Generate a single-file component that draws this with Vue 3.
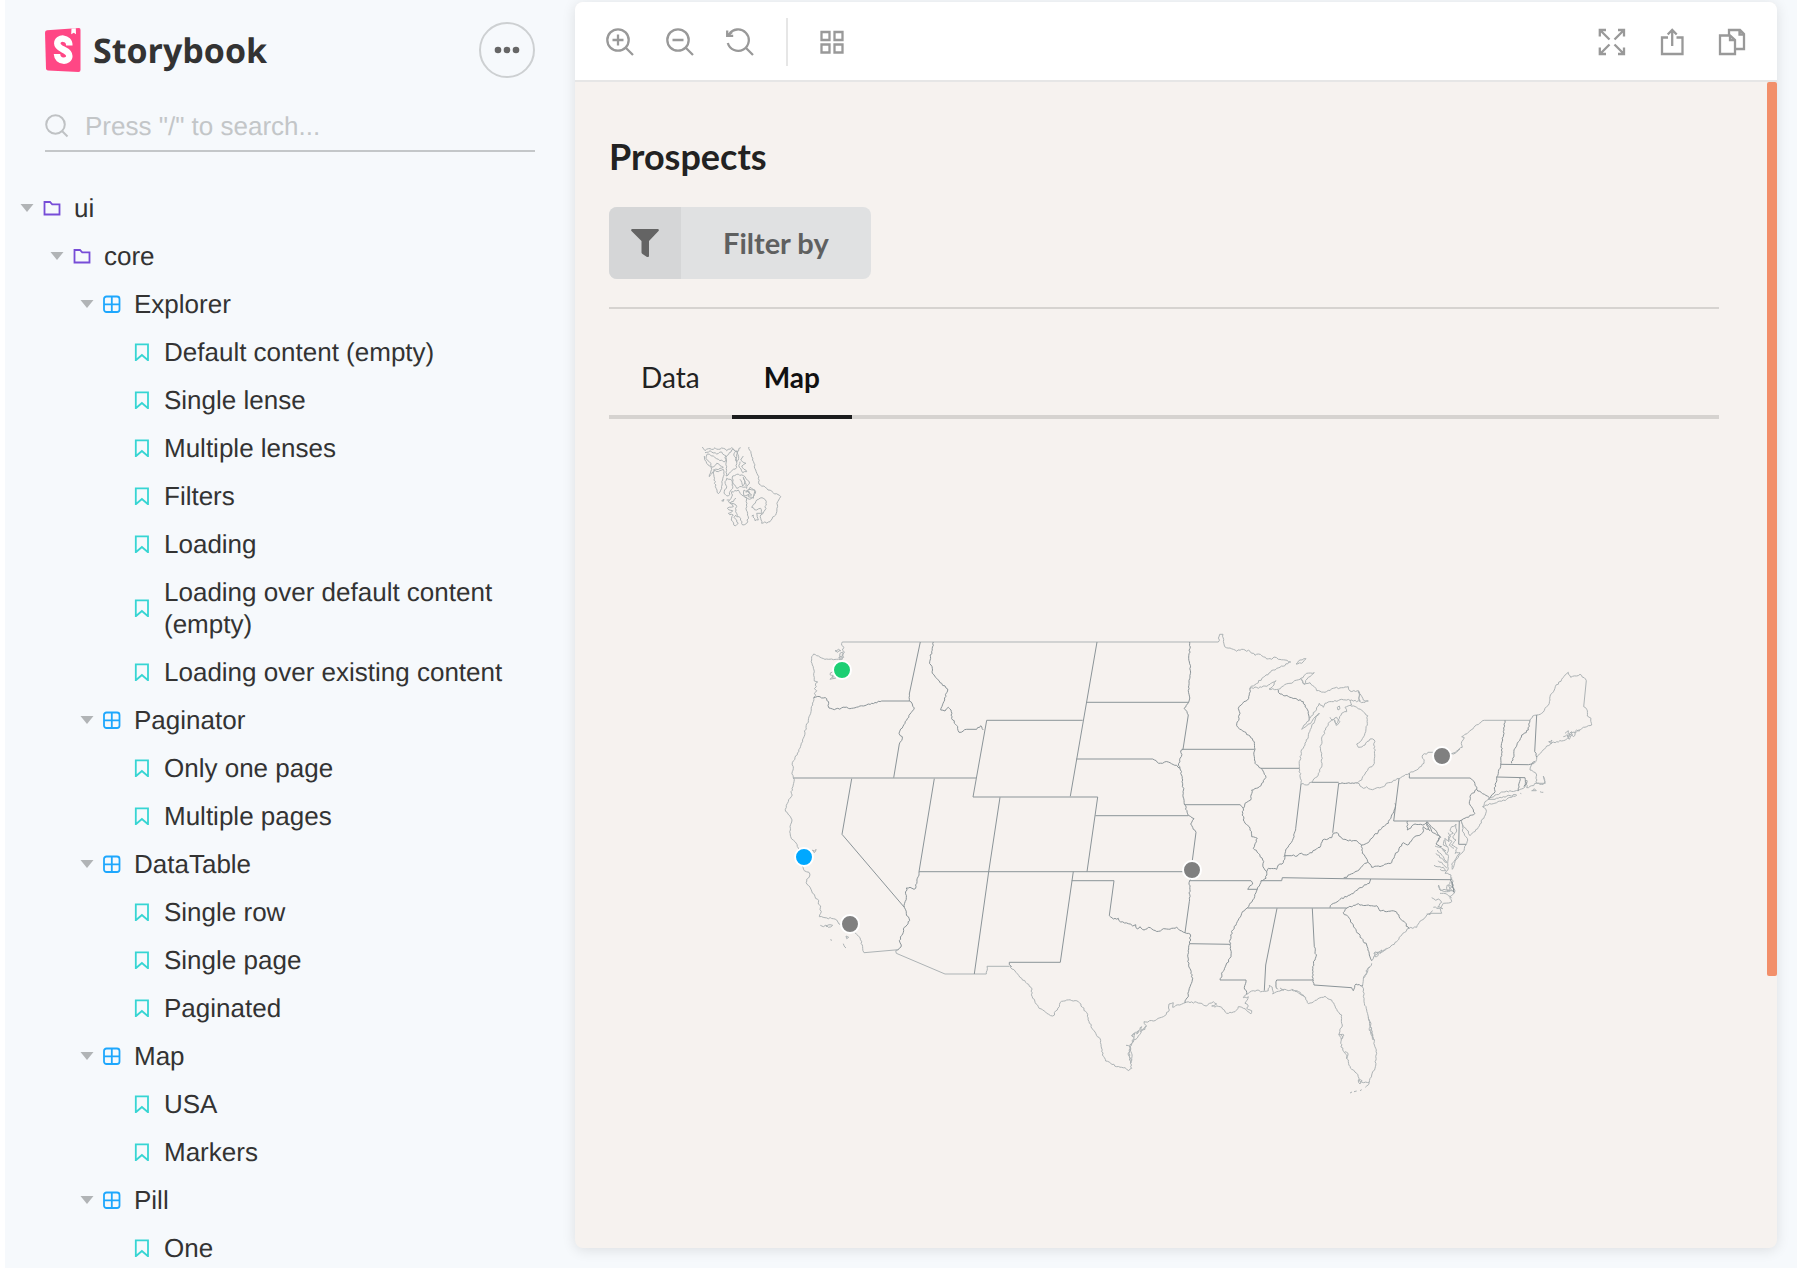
<script setup>
const tree = [
  { label: 'ui', kind: 'folder', depth: 0 },
  { label: 'core', kind: 'folder', depth: 1 },
  { label: 'Explorer', kind: 'component', depth: 2 },
  { label: 'Default content (empty)', kind: 'story', depth: 3 },
  { label: 'Single lense', kind: 'story', depth: 3 },
  { label: 'Multiple lenses', kind: 'story', depth: 3 },
  { label: 'Filters', kind: 'story', depth: 3 },
  { label: 'Loading', kind: 'story', depth: 3 },
  { label: 'Loading over default content (empty)', kind: 'story', depth: 3 },
  { label: 'Loading over existing content', kind: 'story', depth: 3 },
  { label: 'Paginator', kind: 'component', depth: 2 },
  { label: 'Only one page', kind: 'story', depth: 3 },
  { label: 'Multiple pages', kind: 'story', depth: 3 },
  { label: 'DataTable', kind: 'component', depth: 2 },
  { label: 'Single row', kind: 'story', depth: 3 },
  { label: 'Single page', kind: 'story', depth: 3 },
  { label: 'Paginated', kind: 'story', depth: 3 },
  { label: 'Map', kind: 'component', depth: 2 },
  { label: 'USA', kind: 'story', depth: 3 },
  { label: 'Markers', kind: 'story', depth: 3 },
  { label: 'Pill', kind: 'component', depth: 2 },
  { label: 'One', kind: 'story', depth: 3 }
]

// Map sections. Each has its own origin; points are in thirds of a map unit.
const sections = [
  {
    origin: [590, 180],
    coast: [
      '477,800 485,830 497,870 503,885 507,912 530,925 550,938 572,950 563,965 559,1000 540,1025 515,1030 512,1005 525,990 529,965 516,953 500,960 485,982 500,990 512,985 517,1000 500,1000 505,1020 495,1022 490,1005 485,1008',
      '337,801 345,812 355,806 370,808 375,803 385,808 400,805 410,812 425,803 440,815 452,803',
      '345,818 360,812 380,822 395,816 408,828 405,845 385,838 370,828 352,822 348,835 358,845 365,862 380,850 400,862 390,865 372,872 358,890 365,868 350,850 343,828',
      '372,868 385,875 400,868 400,890 395,925 385,941 376,920 372,890 372,868',
      '408,832 410,860 408,888 430,868 440,862 438,835 443,815 430,808 418,818 408,832',
      '432,820 440,845 446,830 440,812 432,820',
      '460,828 452,840 468,850 455,858 462,868 470,875 458,878 448,862 450,845',
      '428,888 445,882 465,890 478,905 470,925 455,920 440,925 430,912 428,888',
      '450,898 458,918 465,905 460,892 468,918',
      '410,895 425,900 428,925 415,948 402,940 410,920 405,905 410,895',
      '462,930 478,935 475,950 490,955 497,935 480,922 470,932 485,945 462,948 462,930',
      '468,938 480,928 495,930 492,948 478,958 468,950',
      '425,935 445,930 455,945 470,955 468,985 475,1010 470,1030 458,1035 452,1015 440,1010 438,975 425,970 415,965 425,950 425,935',
      '438,955 420,970 430,980 412,985 428,992 415,1000 430,1005 424,1020 436,1038 445,1030 432,1012 438,1005',
      '395,962 402,958 400,964 395,962',
      '410,960 418,960'
    ],
    inner: []
  },
  {
    origin: [770, 620],
    coast: [
      '217,66 690,66',
      '217,66 215,76 222,82 217,90 223,98 216,104 221,112 215,120 190,119 170,117 155,114 140,107 131,102 125,110 127,135 132,150 133,183 143,186 137,190 139,200 133,206 140,212 133,220 137,226 131,233',
      '195,92 205,88 212,92 203,97 195,92',
      '210,100 218,96 218,108 209,110 210,100',
      '206,113 218,112 214,118 206,113',
      '190,152 180,164 190,168 180,178 198,174 192,160 186,172 200,168',
      '131,233 128,255 122,280 115,302 108,322 100,355 90,385 75,412 67,428 70,440 67,455 70,473 72,485 66,505 64,530 55,545 49,556 46,568 54,582 63,594 65,606 60,620 62,650 75,665 85,684 92,700',
      '127,690 133,698 138,688 133,694 128,690',
      '97,738 103,752 117,757 119,768 110,778 111,793 125,813 135,830 146,842 145,852 152,858 152,880 148,890 165,893 190,896 200,900 207,912 225,915',
      '255,938 265,948 275,965 278,985 282,998',
      '282,998 385,989 377,992 379,1000',
      '379,1000 525,1062',
      '525,1062 649,1062 651,1039 718,1039',
      '151,916 160,920 168,915 175,922 188,916 180,914 168,921',
      '228,948 236,952 230,956 228,948',
      '220,971 228,984 222,978',
      '181,959 186,961'
    ],
    inner: [
      '131,233 150,230 170,236 176,250 177,264 193,269 225,262 245,265 280,258 305,250 335,243 418,243',
      '451,66 418,222 418,243 427,252 433,264 420,282 405,310 392,327 387,340 397,350 388,372 371,473',
      '70,474 618,474',
      '245,476 216,643 403,862',
      '493,476 447,755',
      '447,755 438,800 432,808 420,802 409,804 409,833 403,862 409,880 419,902 403,922 398,942 388,962 394,975 385,989',
      '447,755 690,755',
      '690,532 656,755 613,1062',
      '490,66 479,125 487,145 487,160 500,175 515,190 533,207 524,240 512,270 525,273 535,262 543,270 548,300 563,320 567,337 590,328 620,328 632,317 640,330',
      '690,301 650,301 609,531 690,531'
    ]
  },
  {
    origin: [1000, 620],
    coast: ['0,66 655,66 659,43 669,43 674,80'],
    inner: [
      '291,66 211,529',
      '259,247 566,247',
      '569,66 571,81 566,111 571,151 567,181 565,211 568,240 566,247 552,265 565,285',
      '565,285 549,388',
      '0,301 248,301',
      '229,417 458,417 476,430 505,426 530,436 540,445',
      '549,388 542,392 544,410 536,430 540,445 548,480 550,520 553,553 565,586 582,596 572,612 580,628 588,637',
      '588,637 577,722',
      '545,388 600,388',
      '553,554 600,554',
      '286,587 565,587',
      '0,531 293,531 261,755',
      '0,755 576,755',
      '220,755 181,1027 28,1027 28,1034 35,1040',
      '215,782 342,782 328,887',
      '328,887 340,897 355,895 362,906 385,911 398,918 407,914 412,927 420,920 432,930 445,922 460,930 476,934 490,926 515,925 530,922 545,933 555,938 571,943',
      '576,750 569,782',
      '569,782 568,845 555,938',
      '569,782 753,782 758,792 743,808 772,808',
      '569,971 690,973'
    ]
  },
  {
    origin: [1200, 620],
    coast: [
      '74,80 90,84 110,94 125,88 150,94 165,106 175,102 200,117 215,118 222,111 235,118 255,120 272,126 240,142 220,150 190,172 165,194 150,204 185,202 205,195 228,182 222,195 207,207 235,208 250,198 270,190 300,178 320,160 343,158 325,172 312,193 302,175 312,193 330,188 343,200 350,212 375,217 400,205 425,203 445,200 450,213 478,215 476,235 480,243 475,212 490,240 505,243 490,247 455,240 425,238 400,245 375,250 370,262 358,250 355,258 345,275 330,295',
      '327,302 312,315 305,328 320,318 335,305 358,279 345,300 335,318 325,350 315,375 303,395 298,445 303,492 320,495 335,487 355,465 366,430 365,400 360,380 370,345 385,310 400,298 408,312 415,300 425,280 440,275 435,262 455,255 452,240',
      '412,262 418,258 420,266 414,270 412,262',
      '390,292 396,300 410,292 420,305 408,316 404,300',
      '450,255 470,262 490,275 503,287 502,310 497,335 485,360 470,372 475,382 495,375 510,357 523,360',
      '523,360 524,410 520,435 505,445 495,462 485,480 472,489 490,505 500,500 512,508 550,500 565,488 597,476 628,460 650,450 672,430 668,405 690,397 705,397',
      '750,402 765,400 780,387',
      '288,132 300,120 318,116 305,130 288,132',
      '515,1022 525,1005 545,995 570,982 590,965 605,945 627,925 650,922 655,912 680,885 690,880 725,880 720,865 730,850 755,845 750,830 764,816 755,772',
      '522,1000 532,996 535,1006 524,1010 522,1000 545,990 540,1000 560,985',
      '695,833 707,841 715,837 725,847 713,861 728,866 700,862',
      '715,795 720,810 740,815 755,810 742,795 741,810 762,815',
      '720,820 740,822 755,835'
    ],
    inner: [
      '235,210 240,222 275,233 310,245 320,265 326,285 327,302',
      '150,204 146,235 128,250 115,265 120,280 110,317 125,330 145,345 163,365 165,388 163,410 165,430 183,445 197,467 190,487 178,500 155,510 152,540 135,550 130,565 127,575 130,600 150,625 155,650 172,655 160,685 175,700 188,720 192,745 200,755',
      '183,445 298,445',
      '0,388 164,388',
      '0,554 120,554 130,565',
      '303,492 287,625',
      '287,625 280,655 270,672 257,690 252,710',
      '200,755 205,745 230,748 235,735 250,728 255,707 275,707 292,708 305,700 320,705 345,690 360,682 368,660 395,653 400,640 412,638 425,655 440,660 470,662 485,675 500,670 520,650 545,625 565,610 575,585 585,565 585,550',
      '416,490 398,638',
      '335,487 416,487',
      '416,491 472,489',
      '597,476 581,603 778,603',
      '628,460 628,474 780,474',
      '485,675 487,700 503,725 515,742 545,738 575,728 585,705 610,668 622,675 640,655 668,638 670,620 690,632 680,610',
      '622,603 622,630 645,612 668,615 683,606 700,625 710,635 722,652 710,665',
      '503,725 480,745 460,760 430,775',
      '183,782 245,782 247,773 430,776',
      '430,776 755,779',
      '200,755 198,775 183,782 172,808 158,840 142,864 125,880 115,900 98,930 90,960 92,990 93,1010 78,1035 68,1055 60,1080 138,1080',
      '142,864 440,864 470,853 530,857 540,873 585,874',
      '585,874 627,925',
      '512,777 508,790 480,803 450,825 420,838 395,853 390,863',
      '231,865 197,1035 193,1112',
      '337,865 343,980 348,1010 338,1040 338,1080',
      '440,864 430,878 448,895 465,925 485,955 500,975 508,1005 515,1022'
    ]
  },
  {
    origin: [1380, 640],
    coast: [
      '213,342 230,333 247,322 245,305 253,293 245,290 265,277 285,258 313,241 450,241 458,228 470,225 485,220 495,205 508,190 510,170 523,150 526,140 545,118 565,97 572,112 600,103 619,122',
      '619,122 611,200',
      '611,200 620,208 622,228 633,235 635,255 610,262 590,275 575,280 562,295 550,302 530,305 515,308 500,318 485,335 470,352 467,365 455,372 450,390 460,395 470,405 470,430 490,433 495,425 490,408 496,430 470,430 455,437 440,443 440,420 435,440 415,452 370,456 345,465 325,478 345,478 370,470 410,465 380,478 350,488 318,495 308,500 315,485 325,478',
      '555,280 565,272 562,290 575,275 580,290 590,270 600,272',
      '550,290 560,285 568,298 578,284',
      '506,305 516,300 514,312 506,305',
      '308,500 318,508 313,530 295,562 270,587 265,573 250,560 245,540 248,575 262,595 258,615 245,640 225,665 217,688 215,672 228,655 240,638 225,640 232,625 215,615 228,600 218,590 230,570 228,552',
      '228,552 215,560 210,572 220,580 205,590 207,605 195,595 197,612 205,625 200,640 205,655 203,670 205,685 195,700 213,705 213,718',
      '193,600 190,615 202,620',
      '162,676 180,680 190,682 198,692 180,688',
      '168,640 185,655 200,668 190,650 172,630',
      '175,662 188,672 200,685',
      '165,618 180,622 198,632 188,628 200,645',
      '205,578 212,590 205,598 216,604 208,616 222,625',
      '176,735 180,750 192,748 206,752 215,742 205,735 210,725',
      '140,822 150,824 158,812',
      '455,452 463,446 469,452 455,452',
      '480,455 490,457',
      '421,460 424,461'
    ],
    inner: [
      '375,241 372,270 368,300 363,322 367,325 362,373 350,411 342,460 325,478',
      '362,373 445,374 465,365',
      '450,241 445,270 425,285 405,325 395,370',
      '470,225 464,335 470,352',
      '350,411 435,413 440,430 432,440',
      '419,413 415,452',
      '240,414 270,414 283,425 290,448 327,472',
      '290,448 270,470 268,490 285,520 260,532 245,540 238,543',
      '238,543 236,613 258,613',
      '180,590 168,612 185,620',
      '140,545 155,575 180,590',
      '213,718 222,757 215,725'
    ]
  },
  {
    origin: [980, 900],
    coast: [
      '90,198 105,213 125,235 153,262 158,295 175,320 200,340 218,348 232,330 240,308 260,300 295,305 320,338 335,385 362,422 365,455 377,483 410,500 435,503 446,512 455,505 452,485 448,455 455,430 475,408 500,378 492,365 520,363 550,350 568,330 567,312 580,308 578,322 615,308 650,307 680,318 700,305 710,312 695,318 725,322 740,340 765,335 775,320 790,325 812,342 815,332 800,325 805,318 795,310 805,290 790,293 800,283 820,272 853,274 865,272 868,255 877,262 878,282 890,275 915,268 945,272 970,285 985,311 1010,300 1035,289 1055,300 1070,328 1085,345 1087,375 1078,400 1088,412 1082,430 1088,450 1100,465 1105,485 1115,508 1130,520 1140,545 1168,547 1175,525 1185,505 1190,460 1180,415 1165,350 1152,300 1148,255 1155,225 1175,190',
      '455,408 465,400 462,412 455,408 475,392 470,402 485,380 480,395 497,380',
      '438,436 450,440 445,465 452,490 456,470 450,440 462,412',
      '1165,350 1172,375 1168,385 1180,420 1172,380',
      '1076,402 1092,405 1084,418 1076,402',
      '1095,455 1104,460 1100,476',
      '1135,540 1146,542 1140,552 1135,540',
      '935,268 945,274 960,282 975,292',
      '900,264 912,270 900,272',
      '1150,235 1160,222 1158,212 1170,202',
      '1168,548 1156,562',
      '1145,569 1140,572',
      '1130,573 1122,575',
      '1116,576 1110,579'
    ],
    inner: [
      '615,308 625,290 628,265 637,240 632,210 623,185',
      '631,103 629,131 623,185',
      '798,240 793,262 800,283',
      '893,268 888,252 890,240 1000,240',
      '1000,240 1002,255 1115,263 1120,272 1128,252 1148,257'
    ]
  }
]

const markers = [
  { id: 'seattle', x: 842, y: 670, color: '#1ccf73' },
  { id: 'san-francisco', x: 804, y: 857, color: '#00a8ff' },
  { id: 'los-angeles', x: 850, y: 924, color: '#808080' },
  { id: 'kansas', x: 1192, y: 870, color: '#808080' },
  { id: 'buffalo', x: 1442, y: 756, color: '#808080' }
]

// Breaks short segments into small irregular steps; long and level ones stay straight.
function trace(points, [ox, oy]) {
  const pts = points.split(' ').map(p => p.split(',').map(Number))
  const out = [pts[0]]
  for (let i = 1; i < pts.length; i++) {
    const [ax, ay] = pts[i - 1]
    const [bx, by] = pts[i]
    const len = Math.hypot(bx - ax, by - ay)
    if (len < 70 && ay !== by) {
      const steps = Math.floor(len / 5)
      for (let s = 1; s < steps; s++) {
        const wave = Math.sin((ax + by * 3 + s * 7) * 12.9898) * 43758.5453
        const shift = ((wave - Math.floor(wave)) - 0.5) * 5
        const t = s / steps
        out.push([
          ax + (bx - ax) * t - ((by - ay) / len) * shift,
          ay + (by - ay) * t + ((bx - ax) / len) * shift
        ])
      }
    }
    out.push([bx, by])
  }
  return 'M' + out.map(([x, y]) => (ox + x / 3).toFixed(1) + ' ' + (oy + y / 3).toFixed(1)).join('L')
}

const coastPath = sections.flatMap(s => s.coast.map(p => trace(p, s.origin))).join('')
const innerPath = sections.flatMap(s => s.inner.map(p => trace(p, s.origin))).join('')
</script>

<template>
  <div class="app">
    <aside class="sidebar">
      <header class="brand-row">
        <a class="brand" href="#">
          <svg class="brand-mark" viewBox="0 0 36 44" aria-hidden="true">
            <path d="M2 2.300 34 0Q35.500 0 35.500 2V42Q35.500 44 33.500 44L3 42.500Q1.200 42.300 1 40.500L0 4.500Q0 2.500 2 2.300Z" fill="#ff4785" />
            <path d="M24.300 17.500C24.600 8.800 12.300 8.600 12.300 15.500C12.300 22 24.300 21 24.300 28C24.300 34.500 12.300 34.500 12 26" fill="none" stroke="#fff" stroke-width="6.500" />
            <path d="M26.500 .6 30.800 .3 31 6.200 28.800 4.700 26.200 6.300Z" fill="#fff" />
          </svg>
          <span>Storybook</span>
        </a>
        <button class="menu" type="button" aria-label="Shortcuts">
          <svg viewBox="0 0 26 8" aria-hidden="true"><circle cx="4" cy="4" r="3.300" /><circle cx="13" cy="4" r="3.300" /><circle cx="22" cy="4" r="3.300" /></svg>
        </button>
      </header>

      <label class="search">
        <svg viewBox="0 0 24 24" aria-hidden="true"><circle cx="10.500" cy="10.500" r="9.300" /><path d="M17 17 22.500 22.500" /></svg>
        <input type="text" aria-label="Search" placeholder="Press &quot;/&quot; to search..." />
      </label>

      <nav class="tree">
        <a v-for="node in tree" :key="node.label" href="#" class="node" :class="'depth-' + node.depth">
          <svg class="caret" viewBox="0 0 14 8" aria-hidden="true"><path v-if="node.kind !== 'story'" d="M.5 0H13.500L7 8Z" /></svg>
          <svg v-if="node.kind === 'folder'" class="icon folder" viewBox="0 0 18 18" aria-hidden="true">
            <path d="M1.500 3H7L9.200 5.300H16.500V15.500H1.500Z" />
          </svg>
          <svg v-else-if="node.kind === 'component'" class="icon component" viewBox="0 0 18 18" aria-hidden="true">
            <rect x="1" y="1.500" width="15.500" height="15.500" rx="2.500" /><path d="M8.800 1.500V17M1 9.300H16.500" />
          </svg>
          <svg v-else class="icon story" viewBox="0 0 18 18" aria-hidden="true">
            <path d="M1.800 1.300H14V17.300L7.900 12 1.800 17.300Z" />
          </svg>
          <span>{{ node.label }}</span>
        </a>
      </nav>
    </aside>

    <main class="panel">
      <div class="toolbar">
        <button type="button" aria-label="Zoom in">
          <svg viewBox="0 0 28 28"><circle cx="12" cy="12" r="10.700" /><path d="M20 20 27 27M6.500 12H17.500M12 6.500V17.500" /></svg>
        </button>
        <button type="button" aria-label="Zoom out">
          <svg viewBox="0 0 28 28"><circle cx="12" cy="12" r="10.700" /><path d="M20 20 27 27M6.500 12H17.500" /></svg>
        </button>
        <button type="button" aria-label="Reset zoom">
          <svg viewBox="0 0 28 28"><path d="M1.800 15A10.700 10.700 0 1 0 3 6.500M20 20 27 27M1.200 2.500V7.800H7.200M1.500 7.500 6 4" /></svg>
        </button>
        <span class="rule"></span>
        <button type="button" aria-label="Preview grid">
          <svg viewBox="0 0 28 28"><path d="M1.500 4H9.500V12H1.500ZM14.500 4H22.500V12H14.500ZM1.500 16.500H9.500V24.500H1.500ZM14.500 16.500H22.500V24.500H14.500Z" /></svg>
        </button>
        <span class="spacer"></span>
        <button type="button" aria-label="Full screen">
          <svg viewBox="0 0 28 28"><path d="M2 2 11.500 11.500M26 2 16.500 11.500M2 26 11.500 16.500M26 26 16.500 16.500M1.800 8.500V2H8M20 2H26V8.500M1.800 19.500V26H8M20 26H26V19.500" /></svg>
        </button>
        <button type="button" aria-label="Open canvas in new tab">
          <svg viewBox="0 0 28 28"><path d="M10 9.500H4V26H24.500V9.500H18.500M14.200 18V2.500M9.700 6.500 14.200 2 18.700 6.500" /></svg>
        </button>
        <button type="button" aria-label="Copy canvas link">
          <svg viewBox="0 0 28 28"><path d="M2 7.500H12L17 12V26H2ZM12 7.500V12H17M11 7V2H22L26 6V21H18M21.500 2V6.500H26" /></svg>
        </button>
      </div>

      <div class="canvas">
        <h1>Prospects</h1>
        <button class="filter" type="button">
          <span class="filter-icon">
            <svg viewBox="0 0 28 28" aria-hidden="true"><path d="M1 0H27Q28.500 .8 27.500 2L18 12V27Q17.500 28.500 16 28L11.500 25Q10.500 24.300 10.500 23.500V12L.5 2Q-.5 .8 1 0Z" /></svg>
          </span>
          <span class="filter-label">Filter by</span>
        </button>
        <hr />
        <div class="tabs" role="tablist">
          <button type="button" role="tab" aria-selected="false">Data</button>
          <button type="button" role="tab" aria-selected="true" class="active">Map</button>
        </div>
        <svg class="map" viewBox="609 447 1110 740" role="img" aria-label="Map of the United States">
          <path class="coast" :d="coastPath" />
          <path class="inner" :d="innerPath" />
          <circle v-for="m in markers" :key="m.id" :cx="m.x" :cy="m.y" r="9" :fill="m.color" stroke="#fff" stroke-width="2" />
        </svg>
        <div class="scroll-thumb"></div>
      </div>
    </main>
  </div>
</template>

<style>
html,
body {
  background: #fff;
  overflow: hidden;
}
</style>

<style scoped>
.app,
.app * {
  box-sizing: border-box;
}

.app {
  display: flex;
  height: calc(100vh - 9px);
  margin: 0 9px 0 5px;
  overflow: hidden;
  background: #f6f9fc;
  font-family: "Liberation Sans", Arial, sans-serif;
  color: #333;
}

button {
  margin: 0;
  padding: 0;
  border: 0;
  background: none;
  font: inherit;
  color: inherit;
}

a {
  color: inherit;
  text-decoration: none;
}

svg {
  display: block;
  flex: none;
}

.sidebar {
  flex: 0 0 570px;
  min-width: 0;
  padding-top: 22px;
  text-rendering: geometricPrecision;
}

.brand-row {
  display: flex;
  align-items: center;
  justify-content: space-between;
  height: 56px;
  margin: 0 40px;
}

.brand {
  display: flex;
  align-items: center;
  gap: 12px;
  font: 700 34px/44px "Open Sans", sans-serif;
}

.brand-mark {
  width: 36px;
  height: 44px;
}

.menu {
  display: flex;
  align-items: center;
  justify-content: center;
  width: 56px;
  height: 56px;
  border: 2px solid #cdd0d2;
  border-radius: 50%;
}

.menu svg {
  width: 26px;
  height: 8px;
  fill: #666;
}

.search {
  display: flex;
  align-items: center;
  gap: 16px;
  height: 52px;
  margin: 22px 40px 32px;
  padding-top: 2px;
  border-bottom: 2px solid #c4c7c9;
}

.search svg {
  width: 24px;
  height: 24px;
  fill: none;
  stroke: #bfc2c4;
  stroke-width: 2;
}

.search input {
  flex: 1;
  min-width: 0;
  height: 40px;
  padding: 0;
  border: 0;
  outline: 0;
  background: none;
  font: 26px/32px "Liberation Sans", Arial, sans-serif;
  text-rendering: geometricPrecision;
}

.search input::placeholder {
  color: #c3c6c8;
  opacity: 1;
}

.node {
  display: flex;
  align-items: center;
  padding: 8px 40px 8px 15px;
  font-size: 26px;
  line-height: 32px;
}

.depth-1 { padding-left: 45px; }
.depth-2 { padding-left: 75px; }
.depth-3 { padding-left: 106px; }

.caret {
  width: 14px;
  height: 8px;
  margin-right: 9px;
  fill: #b1b4b6;
}

.icon {
  width: 18px;
  height: 18px;
  margin-right: 13px;
  fill: none;
  stroke-width: 1.8;
}

.depth-3 .icon {
  margin-right: 12px;
}

.folder { stroke: #774dd7; }
.component { stroke: #1ea7fd; }
.story { stroke: #37d5d3; }

.panel {
  display: flex;
  flex: 1;
  flex-direction: column;
  min-width: 0;
  margin: 2px 20px 20px 0;
  overflow: hidden;
  border-radius: 8px;
  background: #f6f2ef;
  box-shadow: 0 2px 14px rgba(0, 0, 0, 0.11);
}

.toolbar {
  display: flex;
  flex: none;
  align-items: center;
  gap: 32px;
  height: 80px;
  padding: 2px 31px 0;
  border-bottom: 2px solid #e6e6e6;
  background: #fff;
}

.toolbar svg {
  width: 28px;
  height: 28px;
  fill: none;
  stroke: #999;
  stroke-width: 2.3;
}

.rule {
  width: 2px;
  height: 48px;
  background: #e6e6e6;
}

.spacer {
  flex: 1;
}

.canvas {
  position: relative;
  flex: 1;
  min-height: 0;
  padding: 52px 58px 0 34px;
  overflow: hidden;
  font-family: Lato, sans-serif;
}

h1 {
  margin: 0 0 29px;
  font-size: 36px;
  font-weight: 700;
  line-height: 44px;
  color: #222;
}

.filter {
  display: flex;
  height: 72px;
  overflow: hidden;
  border-radius: 8px;
  background: #e0e1e2;
  color: #5f6060;
}

.filter-icon {
  display: flex;
  align-items: center;
  justify-content: center;
  width: 72px;
  background: #d5d6d7;
}

.filter-icon svg {
  width: 28px;
  height: 28px;
  fill: #646464;
}

.filter-label {
  padding: 0 42px;
  font-size: 29px;
  font-weight: 700;
  line-height: 72px;
}

hr {
  height: 2px;
  margin: 28px 0;
  border: 0;
  background: #d6d3d0;
}

.tabs {
  display: flex;
  height: 82px;
  margin-bottom: 28px;
  background: linear-gradient(#d6d3d0, #d6d3d0) bottom / 100% 4px no-repeat;
}

.tabs button {
  padding: 2px 32px 0;
  border-bottom: 4px solid transparent;
  font-size: 28px;
  line-height: 76px;
  color: #222;
}

.tabs .active {
  border-color: #1b1c1d;
  font-weight: 700;
  color: #111;
}

.map {
  width: 100%;
  height: auto;
}

.map path {
  fill: none;
  stroke-linejoin: round;
}

.coast {
  stroke: #adb3b5;
}

.inner {
  stroke: #8b9498;
}

.scroll-thumb {
  position: absolute;
  top: 0;
  right: 0;
  width: 10px;
  height: 76.7%;
  border-radius: 2px;
  background: #f28f6a;
}
</style>
